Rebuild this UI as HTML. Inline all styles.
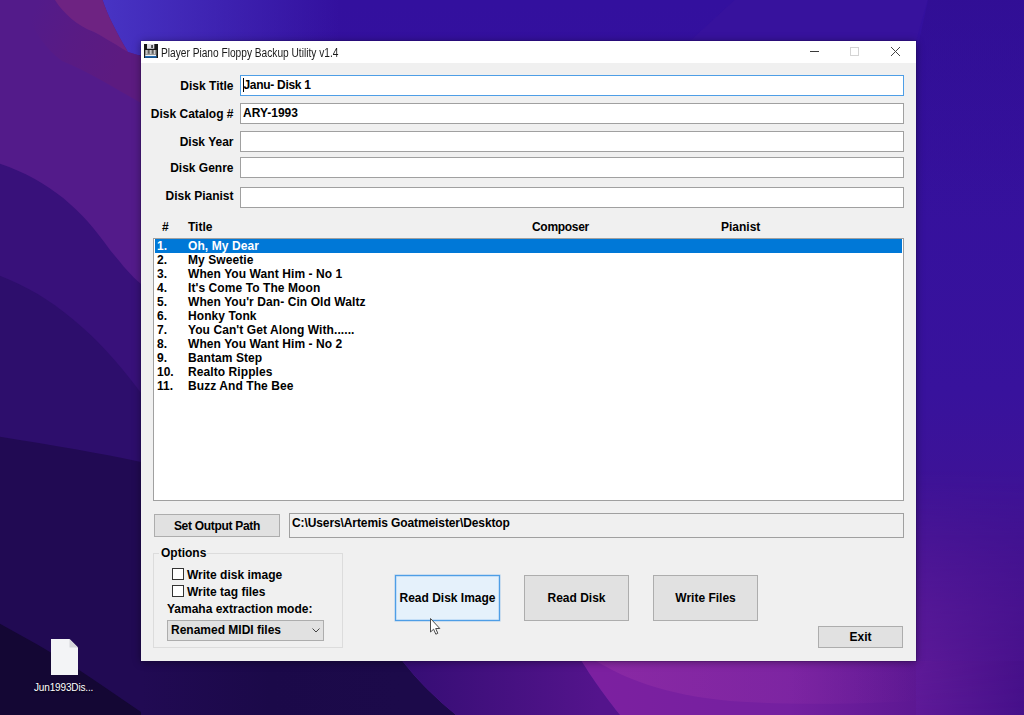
<!DOCTYPE html>
<html><head><meta charset="utf-8">
<style>
html,body{margin:0;padding:0;width:1024px;height:715px;overflow:hidden;background:#2a0f70;}
body{position:relative;font-family:"Liberation Sans",sans-serif;}
.abs{position:absolute;}
.t{position:absolute;font:bold 12px/14px "Liberation Sans",sans-serif;color:#000;white-space:nowrap;}
.win{position:absolute;left:141px;top:41px;width:775px;height:620px;background:#f0f0f0;box-shadow:0 0 0 1px rgba(20,5,60,0.18),0 1px 8px rgba(0,0,0,0.4);}
.tb{position:absolute;left:141px;top:41px;width:775px;height:22px;background:#fff;}
.box{position:absolute;box-sizing:border-box;}
</style></head><body>
<svg class="abs" style="left:0;top:0" width="1024" height="715" viewBox="0 0 1024 715">
  <defs>
    <linearGradient id="base" x1="0" y1="0" x2="0" y2="715" gradientUnits="userSpaceOnUse">
      <stop offset="0" stop-color="#33109e"/>
      <stop offset="0.55" stop-color="#38129c"/>
      <stop offset="0.75" stop-color="#401394"/>
      <stop offset="1" stop-color="#561896"/>
    </linearGradient>
    <linearGradient id="blue" x1="100" y1="0" x2="340" y2="0" gradientUnits="userSpaceOnUse">
      <stop offset="0" stop-color="#4834c4"/>
      <stop offset="1" stop-color="#4834c4" stop-opacity="0"/>
    </linearGradient>
    <linearGradient id="mid" x1="400" y1="0" x2="600" y2="0" gradientUnits="userSpaceOnUse">
      <stop offset="0" stop-color="#350d74"/>
      <stop offset="1" stop-color="#54148c"/>
    </linearGradient>
    <linearGradient id="mag" x1="600" y1="0" x2="1024" y2="0" gradientUnits="userSpaceOnUse">
      <stop offset="0" stop-color="#7c20a0"/>
      <stop offset="0.45" stop-color="#7420a0"/>
      <stop offset="0.8" stop-color="#581690"/>
      <stop offset="1" stop-color="#481188"/>
    </linearGradient>
    <linearGradient id="light" x1="600" y1="0" x2="1000" y2="0" gradientUnits="userSpaceOnUse">
      <stop offset="0" stop-color="#9a34a8" stop-opacity="0.45"/>
      <stop offset="0.45" stop-color="#9a34a8" stop-opacity="0.25"/>
      <stop offset="0.8" stop-color="#9a34a8" stop-opacity="0"/>
    </linearGradient>
    <linearGradient id="dark" x1="141" y1="0" x2="400" y2="0" gradientUnits="userSpaceOnUse">
      <stop offset="0" stop-color="#210a53"/>
      <stop offset="0.5" stop-color="#1b0949"/>
      <stop offset="1" stop-color="#1c0a4a"/>
    </linearGradient>
    <linearGradient id="muted" x1="30" y1="20" x2="120" y2="60" gradientUnits="userSpaceOnUse">
      <stop offset="0" stop-color="#5a1b82" stop-opacity="0"/>
      <stop offset="0.5" stop-color="#5a1b82" stop-opacity="0.8"/>
      <stop offset="1" stop-color="#5c1b80"/>
    </linearGradient>
    <linearGradient id="tr" x1="0" y1="0" x2="0" y2="220" gradientUnits="userSpaceOnUse">
      <stop offset="0" stop-color="#2e0c88" stop-opacity="0.4"/>
      <stop offset="1" stop-color="#2e0c88" stop-opacity="0"/>
    </linearGradient>
    <linearGradient id="rs" x1="916" y1="0" x2="1024" y2="0" gradientUnits="userSpaceOnUse">
      <stop offset="0" stop-color="#5e1a98"/>
      <stop offset="1" stop-color="#46108a"/>
    </linearGradient>
    <linearGradient id="rsm" x1="0" y1="470" x2="0" y2="715" gradientUnits="userSpaceOnUse">
      <stop offset="0" stop-color="#fff" stop-opacity="0"/>
      <stop offset="1" stop-color="#fff" stop-opacity="1"/>
    </linearGradient>
    <mask id="rsmask" maskUnits="userSpaceOnUse" x="900" y="300" width="140" height="430"><rect x="900" y="300" width="140" height="430" fill="url(#rsm)"/></mask>
    <filter id="soft" x="0" y="0" width="1" height="1"><feGaussianBlur stdDeviation="0.8"/></filter>
  </defs>
  <g>
  <rect x="-5" y="-5" width="1034" height="725" fill="url(#base)"/>
  <rect x="100" y="-5" width="400" height="60" fill="url(#blue)"/>
  <path d="M740 -5 L929 -5 L916 41 L690 41 Z" fill="#3a149c" opacity="0.55"/>
  <path d="M929 -5 L1030 -5 L1030 220 L880 220 Z" fill="url(#tr)"/>
  <path d="M-5 -5 L101 -5 C106 12 114 28 128 52 L141 56 L141 720 L-5 720 Z" fill="#531b8a"/>
  <path d="M20 -5 L54 -5 C60 10 75 25 94 32 C105 38 118 46 128 52 L141 56 L141 103 C115 88 85 70 62 61 C40 45 28 20 20 -5 Z" fill="url(#muted)"/>
  <path d="M52 -5 L101 -5 C106 12 114 28 128 52 C118 46 105 38 94 32 C75 25 60 10 52 -5 Z" fill="#6e2382"/>
  <path d="M-5 162 C48 179 81 208 110 250 C120 262 130 275 141 284 L141 720 L-5 720 Z" fill="#38117a"/>
  <path d="M-5 274 C48 293 95 331 141 393 L141 720 L-5 720 Z" fill="#2d0e6c"/>
  <path d="M-5 436 C50 445 100 453 141 462 L141 720 L-5 720 Z" fill="#210a53"/>
  <path d="M-5 621 C30 640 66 660 100 684 L141 712 L141 720 L-5 720 Z" fill="#140734"/>
  <path d="M141 655 L398 655 C412 674 428 692 462 720 L141 720 Z" fill="url(#dark)"/>
  <path d="M398 655 L578 655 C590 675 600 690 624 720 L462 720 C428 692 412 674 398 655 Z" fill="url(#mid)"/>
  <path d="M578 661 L1030 661 L1030 720 L624 720 C600 690 590 675 578 655 Z" fill="url(#mag)"/>
  <path d="M596 661 C625 678 660 694 730 701 C800 706 880 704 960 698 L960 661 Z" fill="url(#light)"/>
  <rect x="916" y="300" width="114" height="420" fill="url(#rs)" mask="url(#rsmask)"/>
  </g>
</svg>
<div class="win"></div>
<div class="tb"></div>
<svg class="abs" style="left:144px;top:44px" width="14" height="14" viewBox="0 0 14 14">
<rect x="0" y="0" width="14" height="14" fill="#161616"/>
<rect x="3" y="0" width="7.3" height="4.8" fill="#dcdce0"/>
<rect x="7.3" y="1" width="1.5" height="3" fill="#2a2a2a"/>
<rect x="1" y="6" width="11.5" height="4.6" fill="#8c8c8c"/>
<rect x="2.2" y="6" width="1.1" height="4" fill="#d0d0d0"/><rect x="6.2" y="6" width="1.1" height="4" fill="#d0d0d0"/><rect x="10" y="6" width="1.1" height="4" fill="#d0d0d0"/>
<rect x="4.2" y="6" width="1" height="3.5" fill="#555"/><rect x="8.2" y="6" width="1" height="3.5" fill="#555"/>
<rect x="1.2" y="10.6" width="11" height="1.5" fill="#f2f2f2"/>
<rect x="0.9" y="12.2" width="11.8" height="1.4" fill="#1c78d2"/>
</svg>
<div class="abs" style="left:161px;top:45.5px;font:12px/14px 'Liberation Sans',sans-serif;color:#1a1a1a;transform:scaleX(0.847);transform-origin:0 0;white-space:nowrap">Player Piano Floppy Backup Utility v1.4</div>
<svg class="abs" style="left:800px;top:41px" width="116" height="22" viewBox="0 0 116 22">
<line x1="10" y1="10.5" x2="19" y2="10.5" stroke="#3a3a3a" stroke-width="1"/>
<rect x="50.5" y="6.5" width="8" height="8" fill="none" stroke="#d4d4d4" stroke-width="1"/>
<path d="M91 6 L100 15 M100 6 L91 15" stroke="#444" stroke-width="1"/>
</svg>
<div class="t" style="right:790.5px;top:78.84px;">Disk Title</div>
<div class="t" style="right:790.5px;top:106.84px;">Disk Catalog #</div>
<div class="t" style="right:790.5px;top:134.84px;">Disk Year</div>
<div class="t" style="right:790.5px;top:160.84px;">Disk Genre</div>
<div class="t" style="right:790.5px;top:188.84px;">Disk Pianist</div>
<div class="box" style="left:240px;top:75px;width:664px;height:21px;background:#fff;border:1px solid #4e9ee6"></div>
<div class="box" style="left:240px;top:103px;width:664px;height:21px;background:#fff;border:1px solid #a0a0a0"></div>
<div class="box" style="left:240px;top:131px;width:664px;height:21px;background:#fff;border:1px solid #a0a0a0"></div>
<div class="box" style="left:240px;top:157px;width:664px;height:21px;background:#fff;border:1px solid #a0a0a0"></div>
<div class="box" style="left:240px;top:187px;width:664px;height:21px;background:#fff;border:1px solid #a0a0a0"></div>
<div class="t" style="left:243.5px;top:77.64px;letter-spacing:-0.3px">Janu- Disk 1</div>
<div class="abs" style="left:243px;top:78px;width:1px;height:14px;background:#000"></div>
<div class="t" style="left:243px;top:105.84px;">ARY-1993</div>
<div class="t" style="left:162px;top:219.84px;">#</div>
<div class="t" style="left:188px;top:219.84px;">Title</div>
<div class="t" style="left:532px;top:219.84px;letter-spacing:-0.3px">Composer</div>
<div class="t" style="left:721px;top:219.84px;">Pianist</div>
<div class="box" style="left:153px;top:238px;width:751px;height:263px;background:#fff;border:1px solid #a0a0a0"></div>
<div class="abs" style="left:155px;top:239px;width:747px;height:14px;background:#0078d7"></div>
<div class="t" style="left:157px;top:239.34px;color:#fff;">1.</div>
<div class="t" style="left:188px;top:239.34px;color:#fff;letter-spacing:0.08px">Oh, My Dear</div>
<div class="t" style="left:157px;top:253.34px;">2.</div>
<div class="t" style="left:188px;top:253.34px;letter-spacing:0.08px">My Sweetie</div>
<div class="t" style="left:157px;top:267.34px;">3.</div>
<div class="t" style="left:188px;top:267.34px;letter-spacing:0.08px">When You Want Him - No 1</div>
<div class="t" style="left:157px;top:281.34px;">4.</div>
<div class="t" style="left:188px;top:281.34px;letter-spacing:0.08px">It&#39;s Come To The Moon</div>
<div class="t" style="left:157px;top:295.34px;">5.</div>
<div class="t" style="left:188px;top:295.34px;letter-spacing:0.08px">When You&#39;r Dan- Cin Old Waltz</div>
<div class="t" style="left:157px;top:309.34px;">6.</div>
<div class="t" style="left:188px;top:309.34px;letter-spacing:0.08px">Honky Tonk</div>
<div class="t" style="left:157px;top:323.34px;">7.</div>
<div class="t" style="left:188px;top:323.34px;letter-spacing:0.08px">You Can&#39;t Get Along With......</div>
<div class="t" style="left:157px;top:337.34px;">8.</div>
<div class="t" style="left:188px;top:337.34px;letter-spacing:0.08px">When You Want Him - No 2</div>
<div class="t" style="left:157px;top:351.34px;">9.</div>
<div class="t" style="left:188px;top:351.34px;letter-spacing:0.08px">Bantam Step</div>
<div class="t" style="left:157px;top:365.34px;">10.</div>
<div class="t" style="left:188px;top:365.34px;letter-spacing:0.08px">Realto Ripples</div>
<div class="t" style="left:157px;top:379.34px;">11.</div>
<div class="t" style="left:188px;top:379.34px;letter-spacing:0.08px">Buzz And The Bee</div>
<div class="box" style="left:154px;top:514px;width:126px;height:23px;background:#e1e1e1;border:1px solid #adadad"></div>
<div class="t" style="left:0px;top:518.84px;letter-spacing:-0.3px;text-align:center;width:126px;left:154px">Set Output Path</div>
<div class="box" style="left:289px;top:513px;width:615px;height:25px;background:#f0f0f0;border:1px solid #a0a0a0"></div>
<div class="t" style="left:292px;top:515.84px;letter-spacing:-0.1px">C:\Users\Artemis Goatmeister\Desktop</div>
<div class="box" style="left:153px;top:553px;width:190px;height:95px;border:1px solid #dcdcdc"></div>
<div class="abs" style="left:159px;top:548px;width:48px;height:12px;background:#f0f0f0"></div>
<div class="t" style="left:161px;top:546.34px;">Options</div>
<div class="box" style="left:172px;top:568px;width:12px;height:12px;background:#fff;border:1px solid #333"></div>
<div class="box" style="left:172px;top:585px;width:12px;height:12px;background:#fff;border:1px solid #333"></div>
<div class="t" style="left:187px;top:567.84px;">Write disk image</div>
<div class="t" style="left:187px;top:584.84px;">Write tag files</div>
<div class="t" style="left:167px;top:601.84px;">Yamaha extraction mode:</div>
<div class="box" style="left:167px;top:620px;width:157px;height:21px;background:#e1e1e1;border:1px solid #adadad"></div>
<div class="t" style="left:171px;top:622.84px;">Renamed MIDI files</div>
<svg class="abs" style="left:311px;top:626px" width="10" height="8" viewBox="0 0 10 8"><path d="M1.5 2.5 L5 6 L8.5 2.5" fill="none" stroke="#444" stroke-width="1"/></svg>
<div class="box" style="left:395px;top:575px;width:105px;height:46px;background:#e5f1fb;border:1px solid #4e9ee6;box-shadow:0 0 0 0.5px rgba(78,158,230,0.45),inset 0 0 0 0.5px rgba(78,158,230,0.45)"></div>
<div class="t" style="left:0px;top:590.84px;left:395px;width:105px;text-align:center">Read Disk Image</div>
<div class="box" style="left:524px;top:575px;width:105px;height:46px;background:#e1e1e1;border:1px solid #adadad"></div>
<div class="t" style="left:0px;top:590.84px;left:524px;width:105px;text-align:center">Read Disk</div>
<div class="box" style="left:653px;top:575px;width:105px;height:46px;background:#e1e1e1;border:1px solid #adadad"></div>
<div class="t" style="left:0px;top:590.84px;left:653px;width:105px;text-align:center">Write Files</div>
<div class="box" style="left:818px;top:626px;width:85px;height:22px;background:#e1e1e1;border:1px solid #adadad"></div>
<div class="t" style="left:0px;top:629.84px;left:818px;width:85px;text-align:center">Exit</div>
<svg class="abs" style="left:429px;top:617px" width="14" height="20" viewBox="0 0 14 20">
<path d="M1.5 1.5 L1.5 15 L4.6 12.2 L6.8 17.2 L8.8 16.3 L6.7 11.5 L10.8 11.5 Z" fill="#fff" stroke="#4a4a4a" stroke-width="1" stroke-linejoin="round"/>
</svg>
<svg class="abs" style="left:50px;top:638px" width="29" height="38" viewBox="0 0 29 38">
<path d="M1 1 L19.5 1 L28 9.5 L28 37 L1 37 Z" fill="#f3f4f6"/>
<path d="M19.5 1 L19.5 9.5 L28 9.5 Z" fill="#d6d6da"/>
</svg>
<div class="abs" style="left:34px;top:681.8px;font:10px/12px 'Liberation Sans',sans-serif;color:#fff;letter-spacing:-0.15px;white-space:nowrap;text-shadow:0 1px 2px rgba(0,0,0,0.8)">Jun1993Dis...</div>
</body></html>
